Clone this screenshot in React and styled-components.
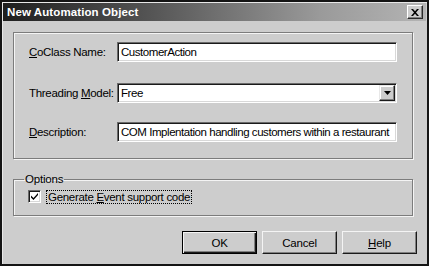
import React from 'react';
import styled, { createGlobalStyle } from 'styled-components';

const GlobalStyle = createGlobalStyle`
  html, body {
    margin: 0;
    padding: 0;
    background: #cdcdcd;
  }
  * {
    box-sizing: border-box;
  }
`;

const Window = styled.div`
  width: 429px;
  height: 266px;
  background: #cdcdcd;
  border: 2px solid #141414;
  box-shadow: inset 1px 1px 0 #e8e8e8;
  padding: 1px;
  display: flex;
  flex-direction: column;
  font-family: "Liberation Sans", Arial, sans-serif;
  font-size: 11px;
  color: #000;
`;

const TitleBar = styled.div`
  height: 18px;
  display: flex;
  align-items: center;
  justify-content: space-between;
  padding: 0 3px 0 4px;
  background: linear-gradient(to right, #1e1e1e 0%, #555 35%, #9a9a9a 75%, #b4b4b4 100%);
`;

const Title = styled.span`
  color: #fff;
  font-weight: bold;
  font-size: 11.5px;
  letter-spacing: 0.1px;
`;

const CloseButton = styled.div`
  width: 16px;
  height: 14px;
  background: #cdcdcd;
  border: 1px solid;
  border-color: #fff #2a2a2a #2a2a2a #fff;
  box-shadow: inset -1px -1px 0 #808080;
  display: flex;
  align-items: center;
  justify-content: center;
`;

const Body = styled.div`
  flex: 1;
  display: flex;
  flex-direction: column;
  padding: 11px 9px 0 10px;
`;

const Group = styled.fieldset`
  margin: 0;
  border: 1px solid #7c7c7c;
  box-shadow: 1px 1px 0 #f4f4f4, inset 1px 1px 0 #f4f4f4;
  width: 400px;
  padding: ${p => p.$pad};
  margin-top: ${p => p.$top || 0}px;
  height: ${p => p.$height}px;
`;

const Legend = styled.legend`
  padding: 0 1px;
  margin-left: 10px;
  line-height: 11px;
  font-size: 11.5px;
  letter-spacing: -0.2px;
`;

const Fields = styled.div`
  display: flex;
  flex-direction: column;
`;

const Row = styled.div`
  display: flex;
  align-items: center;
  margin-top: ${p => p.$gap}px;
`;

const Label = styled.label`
  width: 88px;
  font-size: 11.5px;
  letter-spacing: -0.3px;
  white-space: nowrap;
`;

const Key = styled.span`
  text-decoration: underline;
  text-underline-offset: 1px;
`;

const TextBox = styled.div`
  width: 280px;
  height: 20px;
  background: #fff;
  border: 1px solid;
  border-color: #6a6a6a #fff #fff #6a6a6a;
  box-shadow: inset 1px 1px 0 #1a1a1a, inset -1px -1px 0 #d8d8d8;
  display: flex;
  align-items: center;
  padding: 0 2px 0 3px;
  font-size: 11.5px;
  letter-spacing: -0.45px;
  white-space: nowrap;
  overflow: hidden;
`;

const Value = styled.span`
  flex: 1;
`;

const ArrowButton = styled.div`
  width: 16px;
  height: 16px;
  background: #cdcdcd;
  border: 1px solid;
  border-color: #e8e8e8 #1a1a1a #1a1a1a #e8e8e8;
  box-shadow: inset -1px -1px 0 #808080, inset 1px 1px 0 #fff;
  display: flex;
  align-items: center;
  justify-content: center;
  margin-right: -1px;
`;

const CheckRow = styled.div`
  display: flex;
  align-items: center;
  gap: 6px;
  padding-left: 14px;
  margin-top: 5px;
`;

const CheckBox = styled.div`
  width: 13px;
  height: 13px;
  background: #fff;
  border: 1px solid;
  border-color: #6a6a6a #fff #fff #6a6a6a;
  box-shadow: inset 1px 1px 0 #1a1a1a, inset -1px -1px 0 #d8d8d8;
  display: flex;
  align-items: center;
  justify-content: center;
`;

const CheckLabel = styled.span`
  outline: 1px dotted #000;
  padding: 0 1px;
  font-size: 11.5px;
  letter-spacing: -0.3px;
  line-height: 12px;
`;

const Buttons = styled.div`
  display: flex;
  justify-content: flex-end;
  gap: 5px;
  margin-top: 15px;
  margin-right: 0;
`;

const Button = styled.div`
  width: 75px;
  height: 23px;
  background: #cdcdcd;
  border: 1px solid;
  border-color: ${p => (p.$default ? '#000' : '#f4f4f4 #1a1a1a #1a1a1a #f4f4f4')};
  box-shadow: ${p =>
    p.$default
      ? 'inset 1px 1px 0 #f4f4f4, inset -1px -1px 0 #1a1a1a, inset -2px -2px 0 #808080'
      : 'inset -1px -1px 0 #808080'};
  display: flex;
  align-items: center;
  justify-content: center;
  font-size: 11.5px;
  letter-spacing: -0.2px;
`;

export default function App() {
  return (
    <>
      <GlobalStyle />
      <Window>
        <TitleBar>
          <Title>New Automation Object</Title>
          <CloseButton>
            <svg width="8" height="7" viewBox="0 0 8 7">
              <path d="M0 0h2l2 2.2L6 0h2L5 3.5 8 7H6L4 4.8 2 7H0l3-3.5z" fill="#000" />
            </svg>
          </CloseButton>
        </TitleBar>
        <Body>
          <Group $height={127} $pad="0 15px">
            <Fields>
              <Row $gap={9}>
                <Label>
                  <Key>C</Key>oClass Name:
                </Label>
                <TextBox>
                  <Value>CustomerAction</Value>
                </TextBox>
              </Row>
              <Row $gap={21}>
                <Label>
                  Threading <Key>M</Key>odel:
                </Label>
                <TextBox>
                  <Value>Free</Value>
                  <ArrowButton>
                    <svg width="7" height="4" viewBox="0 0 7 4">
                      <path d="M0 0h7L3.5 4z" fill="#000" />
                    </svg>
                  </ArrowButton>
                </TextBox>
              </Row>
              <Row $gap={19}>
                <Label>
                  <Key>D</Key>escription:
                </Label>
                <TextBox>
                  <Value>COM Implentation handling customers within a restaurant</Value>
                </TextBox>
              </Row>
            </Fields>
          </Group>
          <Group $height={42} $top={15} $pad="0 0 0 0">
            <Legend>Options</Legend>
            <CheckRow>
              <CheckBox>
                <svg width="7" height="7" viewBox="0 0 7 7">
                  <path d="M0 2.5l2.5 2.5L7 0v2L2.5 7 0 4.5z" fill="#000" />
                </svg>
              </CheckBox>
              <CheckLabel>
                Generate <Key>E</Key>vent support code
              </CheckLabel>
            </CheckRow>
          </Group>
          <Buttons>
            <Button $default>OK</Button>
            <Button>Cancel</Button>
            <Button>
              <span>
                <Key>H</Key>elp
              </span>
            </Button>
          </Buttons>
        </Body>
      </Window>
    </>
  );
}
